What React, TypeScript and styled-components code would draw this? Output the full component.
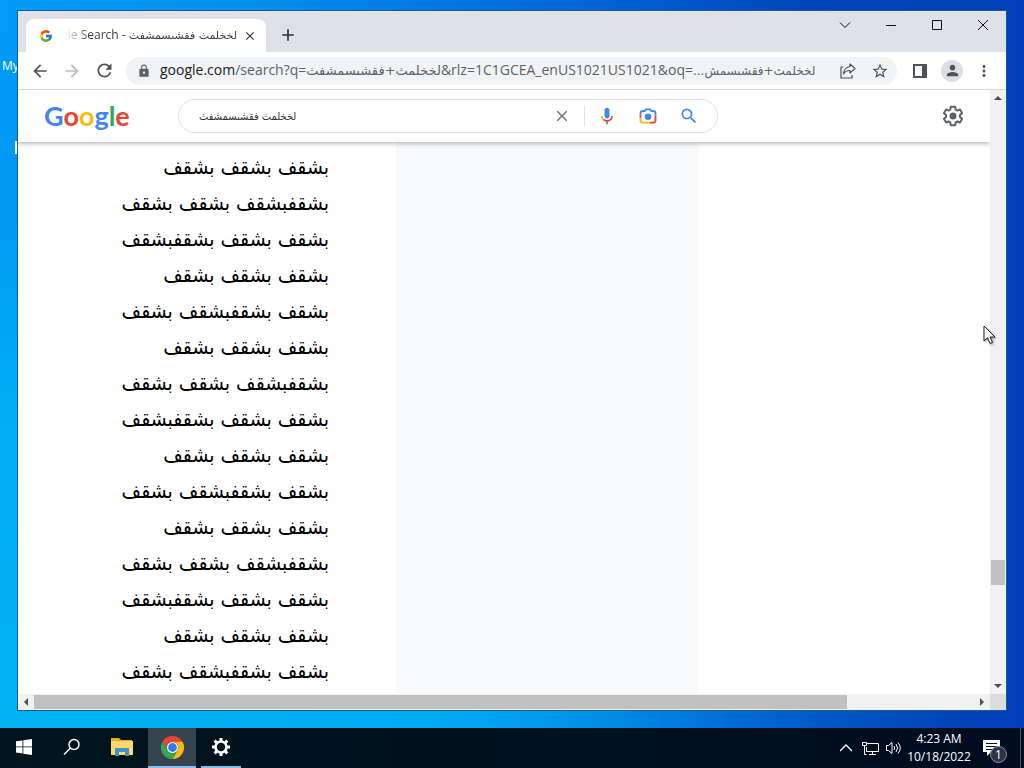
import React from "react";
import styled, { createGlobalStyle, css } from "styled-components";
import { FcGoogle } from "react-icons/fc";
import {
  MdArrowBack,
  MdArrowForward,
  MdRefresh,
  MdLock,
  MdStarBorder,
  MdPerson,
  MdMoreVert,
  MdClose,
  MdAdd,
  MdSearch,
} from "react-icons/md";

const GlobalStyle = createGlobalStyle`
  * {
    box-sizing: border-box;
  }

  body {
    margin: 0;
    font-family: "Open Sans", "DejaVu Sans", sans-serif;
    color: #3c4043;
  }

  button {
    border: 0;
    padding: 0;
    background: none;
    color: inherit;
    font: inherit;
  }
`;

const word = "بشقف";
const short = `${word} ${word} ${word}`;
const first = `${word}${word} ${word} ${word}`;
const middle = `${word} ${word}${word} ${word}`;
const last = `${word} ${word} ${word}${word}`;

const lines = [
  middle,
  short,
  first,
  last,
  short,
  middle,
  short,
  first,
  last,
  short,
  middle,
  short,
  first,
  last,
  short,
  middle,
];

const Screen = styled.div`
  position: relative;
  display: flex;
  flex-direction: column;
  height: 100vh;
  overflow: hidden;
  background:
    radial-gradient(ellipse 95% 90% at 0% 94%, rgba(0, 178, 245, 1) 0%, rgba(0, 176, 245, 0.9) 45%, rgba(0, 150, 240, 0.4) 75%, rgba(0, 120, 230, 0) 100%),
    linear-gradient(to right, #009cf5 0%, #008fec 25%, #0068d8 55%, #0044b8 80%, #003fb8 100%);
`;

const Desktop = styled.main`
  flex: 1;
  min-height: 0;
  display: flex;
  padding: 10px 17px 17px;
`;

const DesktopLabel = styled.span<{ $top: number }>`
  position: absolute;
  left: 2px;
  top: ${({ $top }) => $top}px;
  color: #fff;
  font-size: 12px;
  line-height: 16px;
`;

const DesktopMark = styled.span`
  position: absolute;
  left: 15px;
  top: 141px;
  width: 4px;
  height: 13px;
  background: #fff;
`;

const Window = styled.section`
  position: relative;
  flex: 1;
  min-width: 0;
  display: flex;
  flex-direction: column;
  background: #fff;
  border: 1px solid #1c5a94;
`;

const TabStrip = styled.div`
  display: flex;
  align-items: flex-end;
  height: 41px;
  padding-left: 8px;
  background: #dee1e6;
`;

const Tab = styled.div`
  display: flex;
  align-items: center;
  width: 240px;
  height: 33px;
  margin-right: 5px;
  padding: 0 9px 0 13px;
  background: #fff;
  border-radius: 8px 8px 0 0;

  svg {
    flex: none;
  }
`;

const TabTitle = styled.span`
  flex: 1;
  min-width: 0;
  margin: 0 6px 0 12px;
  overflow: hidden;
  white-space: nowrap;
  font-size: 12px;
  line-height: 20px;
  mask-image: linear-gradient(to right, transparent, #000 24px);
`;

const Arabic = styled.bdi<{ $size: number }>`
  font-family: "DejaVu Sans", sans-serif;
  font-size: ${({ $size }) => $size}px;
`;

const IconButton = styled.button<{ $size?: number; $color?: string }>`
  flex: none;
  display: flex;
  align-items: center;
  justify-content: center;
  width: ${({ $size }) => $size ?? 32}px;
  height: ${({ $size }) => $size ?? 32}px;
  color: ${({ $color }) => $color ?? "#4f5357"};
`;

const WindowButtons = styled.div`
  display: flex;
  align-self: flex-start;
  margin-left: auto;
`;

const WindowButton = styled.button`
  display: flex;
  align-items: center;
  justify-content: center;
  width: 46px;
  height: 28px;
  color: #111;
`;

const Toolbar = styled.div`
  display: flex;
  align-items: center;
  height: 38px;
  padding: 0 6px;
  border-bottom: 1px solid #d8dadd;
`;

const AddressBar = styled.div`
  flex: 1;
  min-width: 0;
  display: flex;
  align-items: center;
  height: 28px;
  margin: 0 7px 0 6px;
  padding: 0 1px 0 11px;
  border-radius: 14px;
  background: #f1f3f4;
  color: #5f6368;
`;

const Url = styled.div`
  flex: 1;
  min-width: 0;
  margin-left: 9px;
  overflow: hidden;
  white-space: nowrap;
  font-size: 14px;
  line-height: 24px;

  b {
    font-weight: 400;
    color: #202124;
  }
`;

const Avatar = styled.span`
  display: flex;
  align-items: center;
  justify-content: center;
  width: 22px;
  height: 22px;
  border-radius: 50%;
  background: #dcdfe6;
`;

const Viewport = styled.div`
  flex: 1;
  min-height: 0;
  display: grid;
  grid-template-columns: minmax(0, 1fr) 16px;
  grid-template-rows: minmax(0, 1fr) 16px;
`;

const Page = styled.div`
  display: flex;
  flex-direction: column;
  min-height: 0;
  overflow: hidden;
`;

const Header = styled.header`
  position: relative;
  z-index: 1;
  flex: none;
  display: flex;
  align-items: center;
  height: 52px;
  padding: 0 25px 0 26px;
  background: #fff;
  box-shadow: 0 1px 5px rgba(32, 33, 36, 0.4);
`;

const Logo = styled.a`
  width: 134px;
  font-family: Lato, sans-serif;
  font-size: 27px;
  font-weight: 700;
  line-height: 40px;
  text-decoration: none;
`;

const Letter = styled.span<{ $color: string }>`
  color: ${({ $color }) => $color};
`;

const SearchBox = styled.form`
  display: flex;
  align-items: center;
  width: 540px;
  height: 34px;
  padding: 0 12px 0 20px;
  border: 1px solid #dfe1e5;
  border-radius: 17px;
`;

const SearchInput = styled.input`
  flex: 1;
  min-width: 0;
  border: 0;
  padding: 0;
  outline: 0;
  background: none;
  color: #333;
  font-family: "DejaVu Sans Condensed", "DejaVu Sans", sans-serif;
  font-size: 11px;
`;

const Divider = styled.span`
  width: 1px;
  height: 20px;
  margin: 0 6px;
  background: #dfe1e5;
`;

const Settings = styled.div`
  margin-left: auto;
`;

const Columns = styled.div`
  flex: 1;
  min-height: 0;
  overflow: hidden;
  display: grid;
  grid-template-columns: 378px 302px 1fr;
`;

const Source = styled.div`
  display: flex;
  flex-direction: column;
  justify-content: flex-end;
  min-height: 0;
  padding: 0 67px 5px 0;
`;

const Line = styled.p`
  margin: 0;
  font-family: "DejaVu Sans Condensed", "DejaVu Sans", sans-serif;
  font-size: 21px;
  line-height: 36px;
  white-space: nowrap;
  color: #000;
`;

const Translation = styled.div`
  background: #f8f9fa;
`;

const Scrollbar = styled.div<{ $vertical?: boolean }>`
  display: flex;
  flex-direction: ${({ $vertical }) => ($vertical ? "column" : "row")};
  background: #f1f1f1;
`;

const ScrollArrow = styled.button`
  flex: none;
  display: flex;
  align-items: center;
  justify-content: center;
  width: 16px;
  height: 16px;
  color: #505050;
`;

const ScrollTrack = styled.div<{ $vertical?: boolean }>`
  flex: 1;
  display: flex;
  flex-direction: ${({ $vertical }) => ($vertical ? "column" : "row")};
  padding: ${({ $vertical }) => ($vertical ? "0 1px" : "1px 0")};
`;

const ScrollGap = styled.div`
  flex: none;
`;

const ScrollThumb = styled.div`
  flex: none;
  background: #c1c1c1;
`;

const Corner = styled.div`
  background: #dcdcdc;
`;

const Cursor = styled.svg`
  position: absolute;
  left: 983px;
  top: 325px;
  filter: drop-shadow(1px 1px 1px rgba(0, 0, 0, 0.4));
`;

const Taskbar = styled.footer`
  flex: none;
  display: flex;
  align-items: stretch;
  height: 40px;
  background: linear-gradient(to right, #00151f, #00101c 50%, #000c20);
  color: #fff;
`;

const TaskButton = styled.button<{ $state?: "open" | "active"; $width?: number }>`
  display: flex;
  align-items: center;
  justify-content: center;
  width: ${({ $width }) => $width ?? 48}px;
  border-bottom: 2px solid transparent;

  ${({ $state }) =>
    $state === "active" &&
    css`
      background: #35444d;
      border-bottom-color: #86bbea;
    `}

  ${({ $state }) =>
    $state === "open" &&
    css`
      margin-left: 5px;
      border-bottom-color: #86bbea;
    `}
`;

const Tray = styled.div`
  display: flex;
  align-items: center;
  margin-left: auto;
  margin-right: 3px;
  border-right: 1px solid #4a5260;
`;

const TrayButton = styled.button`
  display: flex;
  align-items: center;
  justify-content: center;
  width: 24px;
  height: 40px;
`;

const Clock = styled.time`
  width: 66px;
  font-size: 12px;
  line-height: 18px;
  text-align: center;
  white-space: nowrap;
`;

const Notifications = styled.button`
  position: relative;
  width: 48px;
  height: 40px;

  svg {
    display: block;
    margin-left: 11px;
  }
`;

const Badge = styled.span`
  position: absolute;
  left: 18px;
  top: 18px;
  width: 17px;
  height: 17px;
  border: 1px solid #8b929a;
  border-radius: 50%;
  background: #2b3440;
  font-size: 12px;
  line-height: 15px;
`;

const Arrow = ({ points }: { points: string }) => (
  <svg width="8" height="8" viewBox="0 0 8 8">
    <polygon points={points} fill="currentColor" />
  </svg>
);

const MicIcon = () => (
  <svg width="20" height="20" viewBox="0 0 24 24">
    <path fill="#4285f4" d="M12 15c1.66 0 3-1.31 3-2.97V5c0-1.66-1.34-3-3-3S9 3.340 9 5v7.030C9 13.690 10.340 15 12 15z" />
    <path fill="#34a853" d="M11 18.080h2V22h-2z" />
    <path fill="#fbbc04" d="M7.050 16.870C5.780 15.590 5 13.830 5 12h2c0 1.450.56 2.420 1.470 3.380z" />
    <path fill="#ea4335" d="M12 16.930a4.970 5.250 0 0 1-3.540-1.550l-1.410 1.490C8.320 18.150 10.020 19 12 19c3.870 0 6.990-3.130 6.990-7h-1.990c0 2.920-2.240 4.930-5 4.930z" />
  </svg>
);

const LensIcon = () => (
  <svg width="20" height="20" viewBox="0 0 24 24" fill="none" strokeWidth="2.2">
    <path stroke="#4285f4" d="M3 10V9q0-3 3-3h2l1.500-2h5L16 6h2q3 0 3 3v2" />
    <path stroke="#ea4335" d="M21 11v6q0 3-3 3h-4" />
    <path stroke="#fbbc04" d="M14 20H6q-3 0-3-3v-3" />
    <path stroke="#ea4335" d="M3 14v-4" />
    <circle cx="12" cy="13" r="4" fill="#4285f4" />
  </svg>
);

const GearIcon = () => (
  <svg width="24" height="24" viewBox="0 0 24 24" fill="#5f6368">
    <path d="M13.850 22.250h-3.700c-.74 0-1.360-.54-1.450-1.270l-.27-1.890c-.27-.14-.53-.29-.79-.46l-1.800.72c-.7.26-1.470-.03-1.810-.65L2.200 15.530c-.35-.66-.2-1.440.36-1.880l1.530-1.190c-.01-.15-.02-.3-.02-.46 0-.15.01-.31.02-.46l-1.520-1.190c-.59-.45-.74-1.260-.37-1.880l1.850-3.190c.34-.62 1.110-.9 1.790-.63l1.810.73c.26-.17.52-.32.78-.46l.27-1.910c.09-.7.71-1.250 1.440-1.250h3.700c.74 0 1.360.54 1.450 1.270l.27 1.890c.27.14.53.29.79.46l1.800-.72c.71-.26 1.480.03 1.820.65l1.840 3.180c.36.66.2 1.440-.36 1.880l-1.520 1.190c.01.15.02.3.02.460s-.01.310-.02.460l1.520 1.190c.56.45.72 1.230.37 1.860l-1.860 3.220c-.34.62-1.110.9-1.800.63l-1.800-.72c-.26.17-.52.32-.78.46l-.27 1.910c-.1.680-.72 1.220-1.460 1.220zm-3.230-2h2.760l.37-2.550.53-.22c.44-.18.88-.44 1.340-.78l.45-.34 2.380.96 1.380-2.400-2.030-1.580.07-.56c.03-.26.06-.51.06-.78s-.03-.53-.06-.78l-.07-.56 2.030-1.580-1.390-2.400-2.390.96-.45-.35c-.42-.32-.87-.58-1.330-.77l-.52-.22-.37-2.550h-2.760l-.37 2.550-.53.21c-.44.19-.88.44-1.340.79l-.45.33-2.380-.95-1.390 2.390 2.030 1.580-.07.56a7 7 0 0 0-.06.790c0 .26.02.53.06.780l.07.56-2.030 1.580 1.380 2.400 2.390-.96.45.35c.43.33.86.58 1.330.77l.53.22z" />
    <circle cx="12" cy="12" r="3.500" />
  </svg>
);

const ChromeIcon = () => (
  <svg width="23" height="23" viewBox="0 0 24 24">
    <path fill="#ea4335" d="M1.600 6A12 12 0 0 1 22.400 6H12a6 6 0 0 0-5.200 9z" />
    <path fill="#fbbc04" d="M22.400 6A12 12 0 0 1 12 24l5.200-9A6 6 0 0 0 12 6z" />
    <path fill="#34a853" d="M12 24A12 12 0 0 1 1.600 6l5.200 9a6 6 0 0 0 10.400 0z" />
    <circle cx="12" cy="12" r="5.800" fill="#fff" />
    <circle cx="12" cy="12" r="4.600" fill="#2f7de9" />
  </svg>
);

const TaskGearIcon = () => (
  <svg width="20" height="20" viewBox="-10 -10 20 20">
    <circle r="5.500" fill="none" stroke="#fff" strokeWidth="2.600" />
    {[0, 45, 90, 135, 180, 225, 270, 315].map((angle) => (
      <rect key={angle} x="-1.500" y="-9" width="3" height="4" fill="#fff" transform={`rotate(${angle})`} />
    ))}
  </svg>
);

const FolderIcon = () => (
  <svg width="22" height="18" viewBox="0 0 22 18">
    <path fill="#e6a92c" d="M0 0h8l2 2h11v5H0z" />
    <path fill="#ffd869" d="M0 3h22v14H0z" />
    <path fill="#3f93c9" d="M4 10h14v8h-4v-4H8v4H4z" />
  </svg>
);

const letters = [
  ["G", "#4285f4"],
  ["o", "#ea4335"],
  ["o", "#fbbc05"],
  ["g", "#4285f4"],
  ["l", "#34a853"],
  ["e", "#ea4335"],
];

const BrowserTabs = () => (
  <TabStrip>
    <Tab>
      <FcGoogle size={14} />
      <TabTitle dir="rtl">
        <Arabic $size={11}>لخخلمث فقشىسمشفث</Arabic> - Google Search
      </TabTitle>
      <IconButton $size={14} $color="#333" aria-label="Close tab">
        <MdClose size={14} />
      </IconButton>
    </Tab>
    <IconButton $size={34} $color="#333" aria-label="New tab">
      <MdAdd size={20} />
    </IconButton>
    <WindowButtons>
      <WindowButton aria-label="Search tabs">
        <svg width="12" height="12" viewBox="0 0 12 12" fill="none" stroke="currentColor">
          <path d="M1 3.500l5 5 5-5" />
        </svg>
      </WindowButton>
      <WindowButton aria-label="Minimize">
        <svg width="12" height="12" viewBox="0 0 12 12" fill="none" stroke="currentColor">
          <path d="M1 6.500h10" />
        </svg>
      </WindowButton>
      <WindowButton aria-label="Maximize">
        <svg width="12" height="12" viewBox="0 0 12 12" fill="none" stroke="currentColor">
          <path d="M1.500 1.500h9v9h-9z" />
        </svg>
      </WindowButton>
      <WindowButton aria-label="Close">
        <svg width="12" height="12" viewBox="0 0 12 12" fill="none" stroke="currentColor">
          <path d="M1 1l10 10M11 1L1 11" />
        </svg>
      </WindowButton>
    </WindowButtons>
  </TabStrip>
);

const BrowserToolbar = () => (
  <Toolbar>
    <IconButton aria-label="Back">
      <MdArrowBack size={20} />
    </IconButton>
    <IconButton $color="#babcbe" aria-label="Forward">
      <MdArrowForward size={20} />
    </IconButton>
    <IconButton aria-label="Reload">
      <MdRefresh size={21} />
    </IconButton>
    <AddressBar>
      <MdLock size={14} />
      <Url>
        <b>google.com</b>/search?q=<Arabic $size={13}>لخخلمث+فقشىسمشفث</Arabic>
        &amp;rlz=1C1GCEA_enUS1021US1021&amp;oq=
        <Arabic $size={12} dir="rtl">لخخلمث+فقشىسمش...</Arabic>
      </Url>
      <IconButton aria-label="Share">
        <svg width="16" height="16" viewBox="0 0 16 16" fill="none" stroke="currentColor" strokeWidth="1.200">
          <path d="M3.500 4H1v11h11v-3" />
          <path d="M10 1l5 4.500-5 4.500V7.500C7 7.500 5 8.500 3.500 11 4 7 6 4 10 3.500z" strokeLinejoin="round" />
        </svg>
      </IconButton>
      <IconButton aria-label="Bookmark">
        <MdStarBorder size={18} />
      </IconButton>
    </AddressBar>
    <IconButton aria-label="Side panel">
      <svg width="14" height="14" viewBox="0 0 14 14">
        <path fill="currentColor" fillRule="evenodd" d="M0 0h14v14H0zM2 2v10h7V2z" />
      </svg>
    </IconButton>
    <IconButton aria-label="Profile">
      <Avatar>
        <MdPerson size={17} />
      </Avatar>
    </IconButton>
    <IconButton aria-label="Menu">
      <MdMoreVert size={18} />
    </IconButton>
  </Toolbar>
);

const PageHeader = () => (
  <Header>
    <Logo href="#" aria-label="Google">
      {letters.map(([letter, color], index) => (
        <Letter key={index} $color={color}>
          {letter}
        </Letter>
      ))}
    </Logo>
    <SearchBox>
      <SearchInput aria-label="Search" defaultValue="لخخلمث فقشىسمشفث" />
      <IconButton type="button" $color="#70757a" aria-label="Clear">
        <MdClose size={18} />
      </IconButton>
      <Divider />
      <IconButton type="button" aria-label="Search by voice">
        <MicIcon />
      </IconButton>
      <IconButton $size={50} type="button" aria-label="Search by image">
        <LensIcon />
      </IconButton>
      <IconButton $color="#4285f4" aria-label="Google Search">
        <MdSearch size={20} />
      </IconButton>
    </SearchBox>
    <Settings>
      <IconButton $size={24} aria-label="Settings">
        <GearIcon />
      </IconButton>
    </Settings>
  </Header>
);

const VerticalScroll = () => (
  <Scrollbar $vertical>
    <ScrollArrow aria-label="Scroll up">
      <Arrow points="0,6 4,2 8,6" />
    </ScrollArrow>
    <ScrollTrack $vertical>
      <ScrollGap style={{ height: "79.4%" }} />
      <ScrollThumb style={{ height: "4.4%" }} />
    </ScrollTrack>
    <ScrollArrow aria-label="Scroll down">
      <Arrow points="0,2 4,6 8,2" />
    </ScrollArrow>
  </Scrollbar>
);

const HorizontalScroll = () => (
  <Scrollbar>
    <ScrollArrow aria-label="Scroll left">
      <Arrow points="6,0 2,4 6,8" />
    </ScrollArrow>
    <ScrollTrack>
      <ScrollThumb style={{ width: "86.5%" }} />
    </ScrollTrack>
    <ScrollArrow aria-label="Scroll right">
      <Arrow points="2,0 6,4 2,8" />
    </ScrollArrow>
  </Scrollbar>
);

const WindowsTaskbar = () => (
  <Taskbar>
    <TaskButton aria-label="Start">
      <svg width="16" height="16" viewBox="0 0 16 16" fill="#fff">
        <path d="M0 2.300l6.500-.9v6.100H0zM7.300 1.300L16 0v7.500H7.300zM0 8.300h6.500v6.200L0 13.600zM7.300 8.300H16V16l-8.700-1.300z" />
      </svg>
    </TaskButton>
    <TaskButton aria-label="Search">
      <svg width="18" height="18" viewBox="0 0 18 18" fill="none" stroke="#fff" strokeWidth="1.400">
        <circle cx="11" cy="6.500" r="5" />
        <path d="M7.500 10L1 16.500" />
      </svg>
    </TaskButton>
    <TaskButton $width={52} aria-label="File Explorer">
      <FolderIcon />
    </TaskButton>
    <TaskButton $state="active" aria-label="Google Chrome">
      <ChromeIcon />
    </TaskButton>
    <TaskButton $state="open" $width={40} aria-label="Settings">
      <TaskGearIcon />
    </TaskButton>
    <Tray>
      <TrayButton aria-label="Show hidden icons">
        <svg width="12" height="12" viewBox="0 0 12 12" fill="none" stroke="#fff" strokeWidth="1.300">
          <path d="M0 9l6-6 6 6" />
        </svg>
      </TrayButton>
      <TrayButton aria-label="Network">
        <svg width="17" height="15" viewBox="0 0 17 15" fill="none" stroke="#fff">
          <path d="M5 2.500h11.500v8H4.500V6M10.500 10.500v3M7 13.500h7" />
          <path d="M.5 1.500h4v3h-4zM2.500 4.500v9h2" />
        </svg>
      </TrayButton>
      <TrayButton aria-label="Volume">
        <svg width="16" height="14" viewBox="0 0 16 14" fill="none" stroke="#fff">
          <path d="M.5 4.500h2l3.500-3v11l-3.500-3h-2z" />
          <path d="M8 5q1.500 2 0 4M10 3q3 4 0 8M12 1.500q4.500 5.500 0 11" />
        </svg>
      </TrayButton>
      <Clock>
        4:23 AM
        <br />
        10/18/2022
      </Clock>
      <Notifications aria-label="Notifications">
        <svg width="17" height="16" viewBox="0 0 17 16">
          <path fill="#fff" d="M0 0h17v12H8l-4 4v-4H0z" />
          <path stroke="#001020" d="M3 3.500h11M3 6.500h11M3 9.500h7" />
        </svg>
        <Badge>1</Badge>
      </Notifications>
    </Tray>
  </Taskbar>
);

export default function App() {
  return (
    <Screen>
      <GlobalStyle />
      <DesktopLabel $top={58}>My</DesktopLabel>
      <DesktopMark />
      <Desktop>
        <Window>
          <BrowserTabs />
          <BrowserToolbar />
          <Viewport>
            <Page>
              <PageHeader />
              <Columns>
                <Source dir="rtl">
                  {lines.map((line, index) => (
                    <Line key={index}>{line}</Line>
                  ))}
                </Source>
                <Translation />
              </Columns>
            </Page>
            <VerticalScroll />
            <HorizontalScroll />
            <Corner />
          </Viewport>
        </Window>
      </Desktop>
      <WindowsTaskbar />
      <Cursor width="13" height="20" viewBox="0 0 13 20">
        <path d="M1 1v15l3.500-3.300L7 18.500l2.500-1.100L7 12h5z" fill="#fff" stroke="#222" />
      </Cursor>
    </Screen>
  );
}
